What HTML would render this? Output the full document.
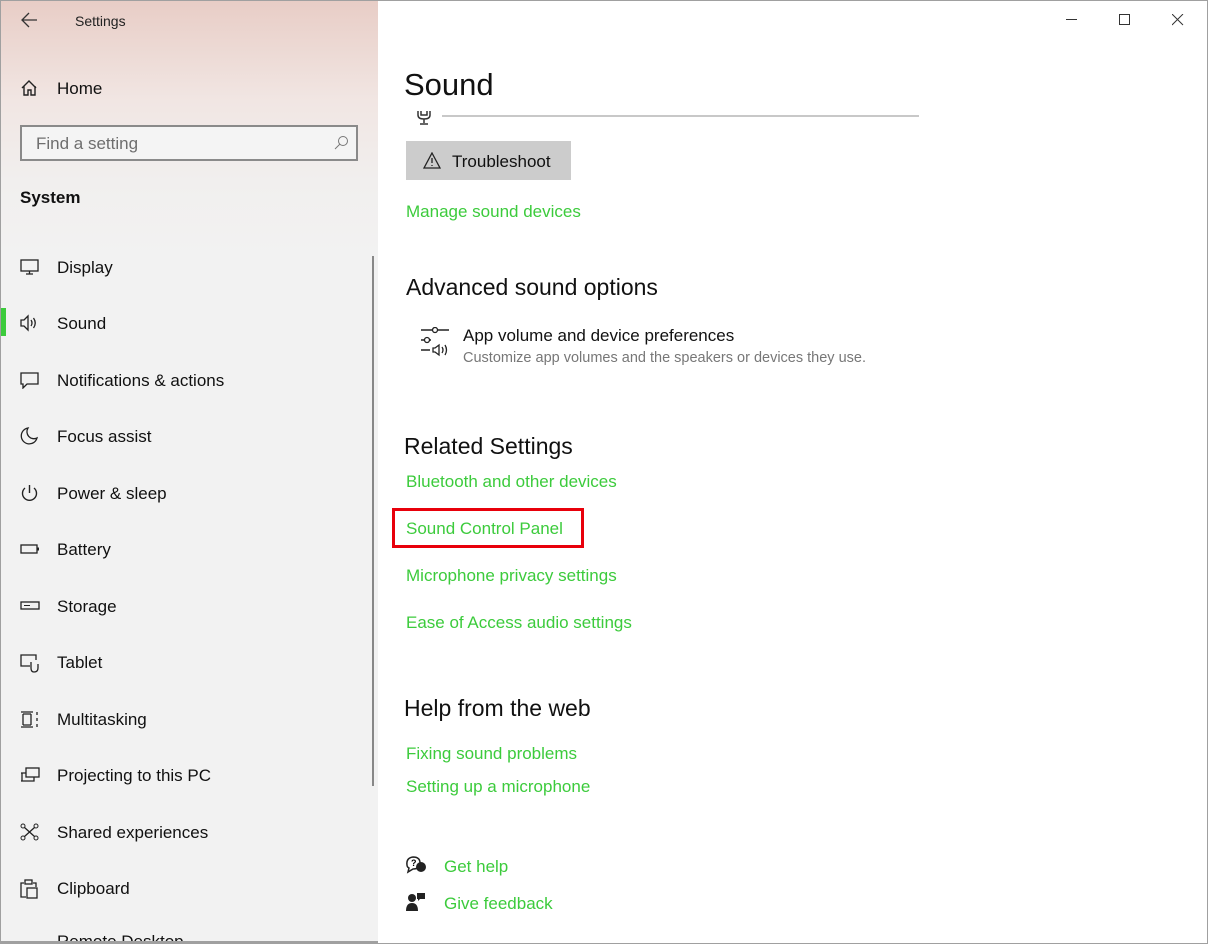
<!DOCTYPE html>
<html><head><meta charset="utf-8"><style>
*{margin:0;padding:0;box-sizing:border-box}
html,body{width:1208px;height:944px;overflow:hidden}
body{font-family:"Liberation Sans",sans-serif;background:#fff;position:relative;color:#000}
.win{position:absolute;left:0;top:0;width:1208px;height:944px;border:1px solid #a0a0a0}
.side{position:absolute;left:1px;top:1px;width:377px;height:941px;background:linear-gradient(#e8cdc6 0px,#f1e6e3 100px,#f1efee 180px,#f2f2f2 260px,#f2f2f2)}
.t{position:absolute;white-space:nowrap}
.nav{position:absolute;left:20px;font-size:17px;color:#111}
.nav svg{position:absolute;left:0;top:1px}
.nav span{position:absolute;left:37px;top:1px;white-space:nowrap}
.g{color:#3ccb3c;font-size:17px}
.h{font-size:23px;color:#111}
</style></head><body>
<div class="win"></div>
<div class="side"></div>
<svg class="t" style="left:21px;top:12px" width="18" height="16"><path d="M1 8H16M8 1L1 8L8 15" stroke="#333" stroke-width="1.3" fill="none"/></svg>
<div class="t" style="left:75px;top:13px;font-size:14px;color:#222">Settings</div>
<svg class="t" style="left:1066px;top:19px" width="12" height="2"><rect width="11" height="1" fill="#333"/></svg>
<svg class="t" style="left:1119px;top:14px" width="12" height="12"><rect x=".5" y=".5" width="10" height="10" stroke="#333" fill="none"/></svg>
<svg class="t" style="left:1172px;top:14px" width="12" height="12"><path d="M0 0L11 11M11 0L0 11" stroke="#333"/></svg>
<div class="nav" style="top:78px"><svg width="20" height="18"><path d="M2 9L9 2L16 9M4 7V16H8V11H11V16H15V7" stroke="#222" stroke-width="1.4" fill="none"/></svg><span>Home</span></div>
<div class="t" style="left:20px;top:125px;width:338px;height:36px;border:2px solid #8a8a8a;background:#f4f4f4"></div>
<div class="t" style="left:36px;top:134px;font-size:17px;color:#6e6e6e">Find a setting</div>
<svg class="t" style="left:333px;top:135px" width="16" height="16"><circle cx="10" cy="6" r="4.5" stroke="#777" fill="none"/><path d="M7 9L2 14" stroke="#777"/></svg>
<div class="t" style="left:20px;top:188px;font-size:17px;font-weight:bold;color:#111">System</div>
<div class="t" style="left:372px;top:256px;width:2px;height:530px;background:#888"></div>
<div class="t" style="left:1px;top:308px;width:5px;height:28px;background:#3ccb3c"></div>
<div class="nav" style="top:257px"><svg width="20" height="18"><rect x="1" y="2" width="17" height="11" stroke="#222" stroke-width="1.3" fill="none"/><path d="M6 16H13M9.5 13V16" stroke="#222" stroke-width="1.3"/></svg><span>Display</span></div>
<div class="nav" style="top:313px"><svg width="20" height="18"><path d="M1 6H4L8 2V16L4 12H1Z" stroke="#222" stroke-width="1.3" fill="none"/><path d="M11 6Q13 9 11 12M13.5 4Q17 9 13.5 14" stroke="#222" stroke-width="1.3" fill="none"/></svg><span>Sound</span></div>
<div class="nav" style="top:370px"><svg width="20" height="18"><path d="M1 2H18V13H7L3 17V13H1Z" stroke="#222" stroke-width="1.3" fill="none"/></svg><span>Notifications &amp; actions</span></div>
<div class="nav" style="top:426px"><svg width="20" height="18"><path d="M8 1A8 8 0 1 0 17 11A7 7 0 0 1 8 1Z" stroke="#222" stroke-width="1.3" fill="none"/></svg><span>Focus assist</span></div>
<div class="nav" style="top:483px"><svg width="20" height="18"><path d="M5 4A7 7 0 1 0 14 4M9.5 1V9" stroke="#222" stroke-width="1.4" fill="none"/></svg><span>Power &amp; sleep</span></div>
<div class="nav" style="top:539px"><svg width="20" height="18"><rect x="1" y="5" width="16" height="8" stroke="#222" stroke-width="1.3" fill="none"/><rect x="17" y="7.5" width="2" height="3" fill="#222"/></svg><span>Battery</span></div>
<div class="nav" style="top:596px"><svg width="20" height="18"><rect x="1" y="5" width="18" height="7" stroke="#222" stroke-width="1.3" fill="none"/><path d="M4 8.5H10" stroke="#222"/></svg><span>Storage</span></div>
<div class="nav" style="top:652px"><svg width="20" height="20"><path d="M10 13H1V2H16V7" stroke="#222" stroke-width="1.3" fill="none"/><path d="M11 9V15Q11 19 14 19Q18 19 18 15V11" stroke="#222" stroke-width="1.3" fill="none"/></svg><span>Tablet</span></div>
<div class="nav" style="top:709px"><svg width="20" height="20"><path d="M1 2H13M1 17H13M3 4V15M11 4V15M3 4H11M3 15H11M17 2V5M17 8V11M17 14V17" stroke="#222" stroke-width="1.3" fill="none"/></svg><span>Multitasking</span></div>
<div class="nav" style="top:765px"><svg width="20" height="18"><rect x="6" y="2" width="13" height="9" stroke="#222" stroke-width="1.3" fill="none"/><path d="M1 7H6M2 7V15H1H14V11M1 15H14" stroke="#222" stroke-width="1.3" fill="none"/></svg><span>Projecting to this PC</span></div>
<div class="nav" style="top:822px"><svg width="20" height="18"><circle cx="3" cy="3" r="2" stroke="#222" fill="none"/><circle cx="16" cy="3" r="2" stroke="#222" fill="none"/><circle cx="3" cy="15" r="2" stroke="#222" fill="none"/><circle cx="16" cy="15" r="2" stroke="#222" fill="none"/><path d="M4.5 4.5L14.5 13.5M14.5 4.5L4.5 13.5" stroke="#222" stroke-width="1.3"/></svg><span>Shared experiences</span></div>
<div class="nav" style="top:878px"><svg width="20" height="20"><path d="M4 4H1V18H6M13 4H16V8" stroke="#222" stroke-width="1.3" fill="none"/><rect x="5" y="1" width="7" height="4" stroke="#222" stroke-width="1.3" fill="none"/><rect x="7" y="9" width="10" height="10" stroke="#222" stroke-width="1.3" fill="none"/></svg><span>Clipboard</span></div>
<div class="t" style="left:0;top:920px;width:378px;height:21px;overflow:hidden"><div class="t" style="left:57px;top:12px;font-size:17px;color:#111">Remote Desktop</div></div>
<div class="t" style="left:1px;top:941px;width:377px;height:3px;background:#a0a0a0"></div>
<div class="t" style="left:404px;top:67px;font-size:31px;color:#111">Sound</div>
<svg class="t" style="left:415px;top:110px" width="18" height="18"><path d="M3 1V5Q3 9 9 9Q15 9 15 5V1M9 9V13M5 14H13M6 1V5H12V1" stroke="#333" stroke-width="1.5" fill="none"/></svg>
<div class="t" style="left:442px;top:115px;width:477px;height:2px;background:#c8c8c8"></div>
<div class="t" style="left:406px;top:141px;width:165px;height:39px;background:#cccccc"></div>
<svg class="t" style="left:423px;top:152px" width="18" height="17"><path d="M9 1L17 16H1Z" stroke="#222" stroke-width="1.3" fill="none"/><path d="M9 6V11M9 13V14" stroke="#222" stroke-width="1.3"/></svg>
<div class="t" style="left:452px;top:152px;font-size:17px;color:#111">Troubleshoot</div>
<div class="t g" style="left:406px;top:202px">Manage sound devices</div>
<div class="t h" style="left:406px;top:274px">Advanced sound options</div>
<svg class="t" style="left:420px;top:327px" width="30" height="30"><path d="M1 3H29M1 13H29M1 23H10" stroke="#222" stroke-width="1.4"/><circle cx="15" cy="3" r="2.5" fill="#fff" stroke="#222" stroke-width="1.3"/><circle cx="7" cy="13" r="2.5" fill="#fff" stroke="#222" stroke-width="1.3"/><rect x="11" y="12" width="19" height="18" fill="#fff"/><path d="M13 21H15L19 18V28L15 25H13Z" stroke="#222" stroke-width="1.3" fill="none"/><path d="M22 20Q24 23 22 26M25 18Q28 23 25 28" stroke="#222" stroke-width="1.3" fill="none"/></svg>
<div class="t" style="left:463px;top:326px;font-size:17px;color:#111">App volume and device preferences</div>
<div class="t" style="left:463px;top:350px;font-size:14.5px;color:#777">Customize app volumes and the speakers or devices they use.</div>
<div class="t h" style="left:404px;top:433px">Related Settings</div>
<div class="t g" style="left:406px;top:472px">Bluetooth and other devices</div>
<div class="t" style="left:392px;top:508px;width:192px;height:40px;border:3px solid #e8000b"></div>
<div class="t g" style="left:406px;top:519px">Sound Control Panel</div>
<div class="t g" style="left:406px;top:566px">Microphone privacy settings</div>
<div class="t g" style="left:406px;top:613px">Ease of Access audio settings</div>
<div class="t h" style="left:404px;top:695px">Help from the web</div>
<div class="t g" style="left:406px;top:744px">Fixing sound problems</div>
<div class="t g" style="left:406px;top:777px">Setting up a microphone</div>
<svg class="t" style="left:405px;top:855px" width="22" height="20"><path d="M2 10Q1 3 8 2Q15 2 15 8Q15 14 8 14L3 17L4 13Q2 12 2 10Z" stroke="#222" stroke-width="1.5" fill="none"/><circle cx="16" cy="12" r="5" fill="#222"/><text x="6" y="11" font-size="9" font-family="Liberation Sans" font-weight="bold">?</text></svg>
<div class="t g" style="left:444px;top:857px">Get help</div>
<svg class="t" style="left:406px;top:892px" width="20" height="20"><circle cx="6" cy="6" r="4" fill="#222"/><path d="M0 19Q0 11 6 11Q12 11 12 19Z" fill="#222"/><path d="M11 1H19V7H14L12 9V7H11Z" fill="#222"/></svg>
<div class="t g" style="left:444px;top:894px">Give feedback</div>
</body></html>
